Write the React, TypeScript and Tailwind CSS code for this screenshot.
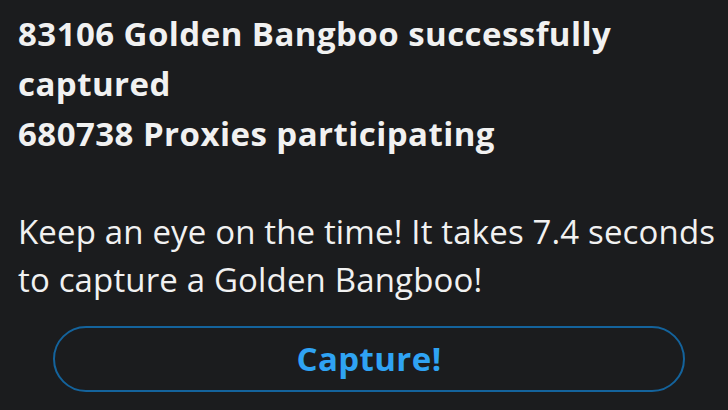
export default function App() {
  return (
    <div className="min-h-[410px] w-[728px] bg-[#1b1c1e] text-[#f1f1f1] pl-[18px] pr-[8px] pt-[9px]" style={{ fontFamily: '"Open Sans", "Noto Sans", sans-serif' }}>
      <div className="text-[33px] font-bold leading-[50px] tracking-[0.45px]">
        <div>83106 Golden Bangboo successfully<br />captured</div>
        <div>680738 Proxies participating</div>
      </div>
      <p className="mt-[49px] text-[33px] leading-[48px] tracking-[0.15px]">
        Keep an eye on the time! It takes 7.4 seconds<br />to capture a Golden Bangboo!
      </p>
      <div className="px-[35px] mt-[22px]">
        <button className="w-full h-[66px] rounded-full border-2 border-[#14639c] text-[#2fa3f3] text-[33px] font-bold tracking-[0.4px] flex items-center justify-center">
          Capture!
        </button>
      </div>
    </div>
  );
}
